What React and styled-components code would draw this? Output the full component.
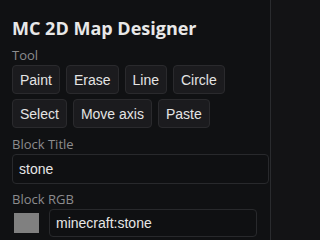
import React from 'react'
import styled, { createGlobalStyle } from 'styled-components'

const Global = createGlobalStyle`
  html, body {
    margin: 0;
    padding: 0;
    background: #131315;
    width: 320px;
    height: 240px;
    overflow: hidden;
  }
`

const Page = styled.div`
  display: flex;
  width: 320px;
  height: 240px;
  background: #131315;
`

const Panel = styled.div`
  width: 257px;
  padding: 16px 1px 0 12px;
  background: #101113;
  border-right: 1px solid #2a2b2e;
  display: flex;
  flex-direction: column;
`

const Title = styled.h1`
  margin: 0 0 8px;
  font-family: 'Open Sans', sans-serif;
  font-weight: 700;
  font-size: 18px;
  line-height: 24px;
  color: #e8e8e8;
`

const Label = styled.div`
  font-family: 'Open Sans', sans-serif;
  font-size: 13px;
  line-height: 15px;
  color: #8c8c8e;
  margin-bottom: ${p => p.gap || 0}px;
`

const ButtonRow = styled.div`
  display: flex;
  flex-wrap: wrap;
  gap: 5px 6px;
  width: 230px;
  margin-bottom: 9px;
`

const ToolButton = styled.button`
  height: 29px;
  padding: 0 7px;
  background: #1b1b1e;
  border: 1px solid #2a2a2d;
  border-radius: 4px;
  font-family: 'Liberation Sans', Arial, sans-serif;
  font-size: 14px;
  color: #e4e4e4;
`

const TextInput = styled.div`
  box-sizing: border-box;
  height: ${p => p.h || 30}px;
  width: ${p => p.w ? `${p.w}px` : '100%'};
  padding: 0 6px;
  display: flex;
  align-items: center;
  background: #0f1012;
  border: 1px solid #28292c;
  border-radius: 4px;
  font-family: 'Liberation Sans', Arial, sans-serif;
  font-size: 14px;
  color: #e6e6e6;
  margin-bottom: ${p => p.mb || 0}px;
`

const ColorRow = styled.div`
  display: flex;
  align-items: center;
  gap: 10px;
  padding-left: 2px;
`

const Swatch = styled.div`
  width: 25px;
  height: 20px;
  background: ${p => p.color};
`

const tools = ['Paint', 'Erase', 'Line', 'Circle', 'Select', 'Move axis', 'Paste']

const App = () => (
  <Page>
    <Global />
    <Panel>
      <Title>MC 2D Map Designer</Title>
      <Label gap={2}>Tool</Label>
      <ButtonRow>
        {tools.map(t => <ToolButton key={t}>{t}</ToolButton>)}
      </ButtonRow>
      <Label gap={2}>Block Title</Label>
      <TextInput mb={8}>stone</TextInput>
      <Label gap={2}>Block RGB</Label>
      <ColorRow>
        <Swatch color="#808080" />
        <TextInput w={208} h={28}>minecraft:stone</TextInput>
      </ColorRow>
    </Panel>
  </Page>
)

export default App
